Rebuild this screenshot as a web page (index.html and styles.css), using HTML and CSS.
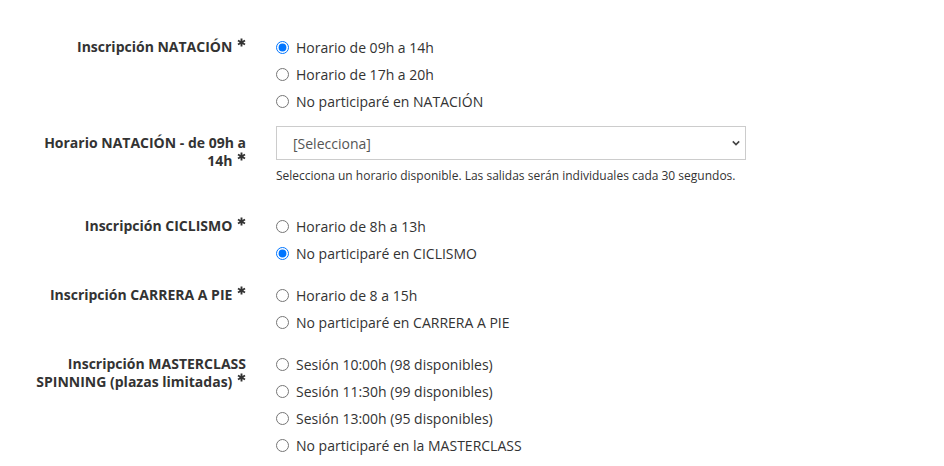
FILE: index.html
```html
<!DOCTYPE html>
<html lang="es">
<head>
    <meta charset="UTF-8">
    <title>Inscripción</title>
    <link rel="stylesheet" href="styles.css">
</head>
<body>
    <form id="inscripcion">
        <div class="field">
            <label class="label">Inscripción NATACIÓN <span class="req"><svg viewBox="0 0 10 10"><path d="M5 0.5V9.5M1.1 2.75L8.9 7.25M1.1 7.25L8.9 2.75"/></svg></span></label>
            <div class="options">
                <label class="opt"><input type="radio" name="natacion" checked>Horario de 09h a 14h</label>
                <label class="opt"><input type="radio" name="natacion">Horario de 17h a 20h</label>
                <label class="opt"><input type="radio" name="natacion">No participaré en NATACIÓN</label>
            </div>
        </div>
        <div class="field select-field">
            <label class="label">Horario NATACIÓN - de 09h a 14h <span class="req"><svg viewBox="0 0 10 10"><path d="M5 0.5V9.5M1.1 2.75L8.9 7.25M1.1 7.25L8.9 2.75"/></svg></span></label>
            <div class="options">
                <div class="select-wrap">
                    <select>
                        <option>[Selecciona]</option>
                    </select>
                    <svg class="chevron" viewBox="0 0 10 6"><path d="M1 1L5 5L9 1"/></svg>
                </div>
                <p class="help">Selecciona un horario disponible. Las salidas serán individuales cada 30 segundos.</p>
            </div>
        </div>
        <div class="field">
            <label class="label">Inscripción CICLISMO <span class="req"><svg viewBox="0 0 10 10"><path d="M5 0.5V9.5M1.1 2.75L8.9 7.25M1.1 7.25L8.9 2.75"/></svg></span></label>
            <div class="options">
                <label class="opt"><input type="radio" name="ciclismo">Horario de 8h a 13h</label>
                <label class="opt"><input type="radio" name="ciclismo" checked>No participaré en CICLISMO</label>
            </div>
        </div>
        <div class="field">
            <label class="label">Inscripción CARRERA A PIE <span class="req"><svg viewBox="0 0 10 10"><path d="M5 0.5V9.5M1.1 2.75L8.9 7.25M1.1 7.25L8.9 2.75"/></svg></span></label>
            <div class="options">
                <label class="opt"><input type="radio" name="carrera">Horario de 8 a 15h</label>
                <label class="opt"><input type="radio" name="carrera">No participaré en CARRERA A PIE</label>
            </div>
        </div>
        <div class="field">
            <label class="label">Inscripción MASTERCLASS SPINNING (plazas limitadas) <span class="req"><svg viewBox="0 0 10 10"><path d="M5 0.5V9.5M1.1 2.75L8.9 7.25M1.1 7.25L8.9 2.75"/></svg></span></label>
            <div class="options">
                <label class="opt"><input type="radio" name="master">Sesión 10:00h (98 disponibles)</label>
                <label class="opt"><input type="radio" name="master">Sesión 11:30h (99 disponibles)</label>
                <label class="opt"><input type="radio" name="master">Sesión 13:00h (95 disponibles)</label>
                <label class="opt"><input type="radio" name="master">No participaré en la MASTERCLASS</label>
            </div>
        </div>
    </form>
</body>
</html>
```

FILE: styles.css
```css
body{
    margin: 0;
    background: #fff;
    font-family: "Open Sans", "Liberation Sans", sans-serif;
    font-size: 14px;
    color: #333;
}
#inscripcion{
    padding: 34px 0 0 30px;
}
.field{
    display: grid;
    grid-template-columns: 216px 470px;
    column-gap: 30px;
    margin-bottom: 15px;
    .label{
        padding-top: 4px;
        font-weight: bold;
        line-height: 18px;
        text-align: right;
        color: #333;
    }
}
.select-field{
    margin-top: -4px;
    .label{
        padding-top: 8px;
    }
}
.req svg{
    width: 9px;
    height: 9px;
    vertical-align: 5px;
    margin-left: 1px;
    stroke: #333;
    stroke-width: 2.1;
    fill: none;
}
.opt{
    display: flex;
    align-items: center;
    height: 27px;
    color: #333;
    input{
        width: 13px;
        height: 13px;
        margin: 0 7px 0 0;
    }
}
.select-wrap{
    position: relative;
    select{
        width: 470px;
        height: 34px;
        padding: 0 16px;
        border: 1px solid #ccc;
        border-radius: 0;
        background: #fff;
        appearance: none;
        font-family: inherit;
        font-size: 14px;
        color: #555;
    }
    .chevron{
        position: absolute;
        right: 6px;
        top: 14px;
        width: 8px;
        height: 6px;
        stroke: #444;
        stroke-width: 2;
        fill: none;
    }
}
.help{
    margin: 8px 0 14px;
    font-size: 12px;
    line-height: 16px;
    color: #333;
}
```
